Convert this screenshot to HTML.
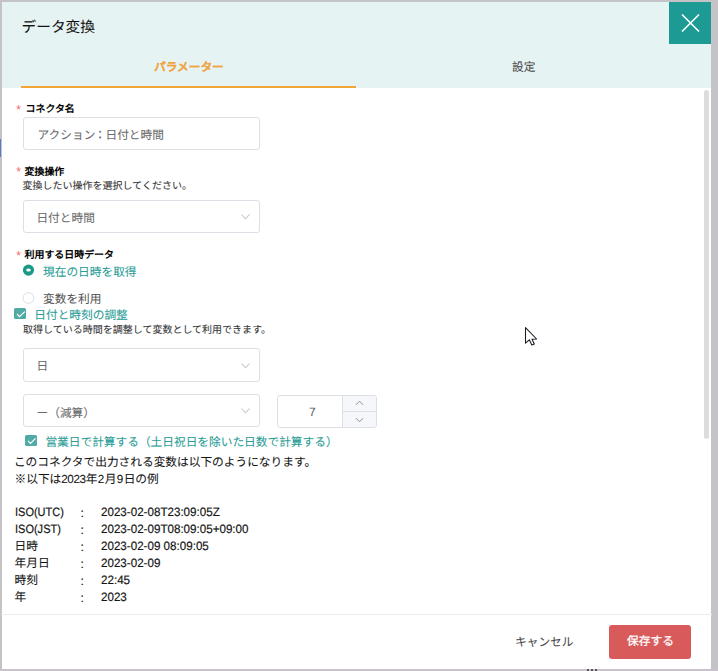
<!DOCTYPE html>
<html lang="zh-CN">
<head>
<meta charset="utf-8">
<style>
html,body{margin:0;padding:0;}
body{width:718px;height:671px;position:relative;overflow:hidden;background:#c4c3c8;font-family:"Liberation Sans",sans-serif;color:#303133;}
.a{position:absolute;white-space:nowrap;line-height:1;text-rendering:geometricPrecision;-webkit-text-stroke:0.08px currentColor;}
.lat{-webkit-text-stroke:0.18px currentColor;}
.box{position:absolute;box-sizing:border-box;border:1px solid #dcdfe6;border-radius:3px;background:#fff;}
.req{position:absolute;font-size:12px;line-height:1;color:#f56c6c;}
.dg{letter-spacing:-0.5px;}
svg{position:absolute;overflow:visible;}
</style>
</head>
<body>
<div style="position:absolute;left:1.7px;top:2px;width:709.7px;height:666.6px;background:#fff;"></div>
<div style="position:absolute;left:1.7px;top:2px;width:709.7px;height:86px;background:#e6f3f3;"></div>
<div style="position:absolute;left:0;top:139px;width:1.3px;height:18px;background:#5b79c6"></div>
<div style="position:absolute;left:669px;top:2px;width:42px;height:42px;background:#1e9a94;"></div>
<svg style="left:669px;top:2px" width="42" height="42" viewBox="0 0 42 42"><path d="M13 12.5 L30 29.5 M30 12.5 L13 29.5" stroke="#fff" stroke-width="1.6" fill="none"/></svg>
<div class="a" style="left:21.5px;top:20.5px;font-size:14.7px;color:#141414">データ変換</div>
<div class="a" style="left:154px;top:62px;font-size:11.7px;color:#f0a543;font-weight:bold">パラメーター</div>
<div class="a" style="left:512px;top:62px;font-size:11.7px;color:#4a4a4a">設定</div>
<div style="position:absolute;left:21.2px;top:86px;width:335px;height:2px;background:#f2a637"></div>
<div style="position:absolute;left:704px;top:90px;width:5px;height:349px;border-radius:3px;background:#dcdcdf"></div>
<div class="req" style="left:16.3px;top:103.5px">*</div>
<div class="a" style="left:25.5px;top:104.5px;font-size:9.95px;font-weight:bold;color:#000;-webkit-text-stroke:0">コネクタ名</div>
<div class="box" style="left:23px;top:117px;width:237px;height:33px"></div>
<div class="a" style="left:37.5px;top:130px;font-size:11.7px;color:#6b6b6b">アクショ<span style="letter-spacing:-1.2px">ン</span><span lang="zh-TW" style="letter-spacing:-0.4px">：</span>日付と時間</div>
<div class="req" style="left:16.3px;top:166px">*</div>
<div class="a" style="left:24.5px;top:167.5px;font-size:9.95px;font-weight:bold;color:#000;-webkit-text-stroke:0">変換操作</div>
<div class="a" style="left:22.5px;top:181.5px;font-size:10.0px;color:#333">変換したい操作を選択してください。</div>
<div class="box" style="left:23px;top:200px;width:237px;height:33px"></div>
<div class="a" style="left:36.4px;top:213px;font-size:11.7px;color:#6b6b6b">日付と時間</div>
<svg style="left:241px;top:214px" width="9" height="6" viewBox="0 0 9 6"><path d="M0.5 0.5 L4.5 4.8 L8.5 0.5" stroke="#c0c4cc" stroke-width="1.1" fill="none"/></svg>
<div class="req" style="left:16.3px;top:249.5px">*</div>
<div class="a" style="left:24.5px;top:250.5px;font-size:9.95px;font-weight:bold;color:#000;-webkit-text-stroke:0">利用する日時データ</div>
<svg style="left:22px;top:264px" width="13" height="13" viewBox="0 0 13 13"><circle cx="6.5" cy="6.1" r="5.6" fill="#1a9986"/><ellipse cx="6.5" cy="6.1" rx="2.3" ry="1.5" fill="#fff"/></svg>
<div class="a" style="left:43px;top:267px;font-size:11.7px;color:#2a9d96">現在の日時を取得</div>
<svg style="left:22px;top:292px" width="13" height="13" viewBox="0 0 13 13"><circle cx="6.5" cy="6" r="5.4" fill="#fff" stroke="#dcdfe6" stroke-width="1"/></svg>
<div class="a" style="left:43px;top:294px;font-size:11.7px;color:#555">変数を利用</div>
<svg style="left:14px;top:308px" width="12" height="11" viewBox="0 0 12 11"><rect x="0" y="0" width="12" height="11" rx="1.5" fill="#50aaa5"/><path d="M3 6 L5.5 8.6 L10.8 3.6" stroke="#fff" stroke-width="1.2" fill="none"/></svg>
<div class="a" style="left:34.3px;top:310px;font-size:11.7px;color:#2a9d96">日付と時刻の調整</div>
<div class="a" style="left:23px;top:326px;font-size:10.0px;color:#333">取得している時間を調整して変数として利用できます。</div>
<div class="box" style="left:23px;top:348.2px;width:237px;height:33.4px"></div>
<div class="a" style="left:36.5px;top:361.2px;font-size:11.7px;color:#6b6b6b">日</div>
<svg style="left:241px;top:362.6px" width="9" height="6" viewBox="0 0 9 6"><path d="M0.5 0.5 L4.5 4.8 L8.5 0.5" stroke="#c0c4cc" stroke-width="1.1" fill="none"/></svg>
<div class="box" style="left:23px;top:394px;width:237px;height:33px"></div>
<div class="a" style="left:36.5px;top:408px;font-size:11.7px;color:#6b6b6b">ー（減算）</div>
<svg style="left:241px;top:408px" width="9" height="6" viewBox="0 0 9 6"><path d="M0.5 0.5 L4.5 4.8 L8.5 0.5" stroke="#c0c4cc" stroke-width="1.1" fill="none"/></svg>
<div class="box" style="left:277px;top:395px;width:100px;height:33px;overflow:hidden">
  <div style="position:absolute;left:64px;top:0;width:34px;height:31px;background:#f5f7fa;border-left:1px solid #dcdfe6"></div>
  <div style="position:absolute;left:64px;top:14.6px;width:35px;height:1px;background:#dcdfe6"></div>
</div>
<svg style="left:355px;top:400px" width="9" height="6" viewBox="0 0 9 6"><path d="M1 4.8 L4.5 1.2 L8 4.8" stroke="#8c8f96" stroke-width="1" fill="none"/></svg>
<svg style="left:355px;top:417px" width="9" height="6" viewBox="0 0 9 6"><path d="M1 1.2 L4.5 4.8 L8 1.2" stroke="#8c8f96" stroke-width="1" fill="none"/></svg>
<div class="a" style="left:309px;top:405.5px;font-size:12.1px;color:#555;-webkit-text-stroke:0">7</div>
<svg style="left:25px;top:435px" width="12" height="11" viewBox="0 0 12 11"><rect x="0" y="0" width="12" height="11" rx="1.5" fill="#50aaa5"/><path d="M3 5.8 L5.5 8.4 L10.5 3.4" stroke="#fff" stroke-width="1.2" fill="none"/></svg>
<div class="a" style="left:45.4px;top:437px;font-size:11.7px;color:#2a9d96">営業日で計算する（土日祝日を除いた日数で計算する）</div>
<div class="a" style="left:13.9px;top:457px;font-size:11.7px;color:#141414">このコネクタで出力される変数は以下のようになります。</div>
<div class="a" style="left:14.5px;top:473.7px;font-size:11.7px;color:#141414">※以下は<span style="letter-spacing:-0.4px">2023</span><span style="letter-spacing:0.4px">年2月9</span>日の例</div>
<div class="a lat" style="left:15.3px;top:506px;font-size:12.1px;color:#141414;transform:scaleX(0.91);transform-origin:0 0">ISO(UTC)</div>
<div class="a lat" style="left:80.5px;top:506.5px;font-size:12.1px;color:#141414">:</div>
<div class="a lat" style="left:101px;top:506px;font-size:12.1px;color:#141414;transform:scaleX(0.96);transform-origin:0 0">2023-02-08T23:09:05Z</div>
<div class="a lat" style="left:15.3px;top:523px;font-size:12.1px;color:#141414;transform:scaleX(0.91);transform-origin:0 0">ISO(JST)</div>
<div class="a lat" style="left:80.5px;top:523.5px;font-size:12.1px;color:#141414">:</div>
<div class="a lat" style="left:101px;top:523px;font-size:12.1px;color:#141414;transform:scaleX(0.96);transform-origin:0 0">2023-02-09T08:09:05+09:00</div>
<div class="a" style="left:14.6px;top:541px;font-size:11.7px;color:#141414">日時</div>
<div class="a lat" style="left:80.5px;top:540.5px;font-size:12.1px;color:#141414">:</div>
<div class="a lat" style="left:101px;top:540px;font-size:12.1px;color:#141414;transform:scaleX(0.96);transform-origin:0 0">2023-02-09 08:09:05</div>
<div class="a" style="left:14.6px;top:558px;font-size:11.7px;color:#141414">年月日</div>
<div class="a lat" style="left:80.5px;top:557.5px;font-size:12.1px;color:#141414">:</div>
<div class="a lat" style="left:101px;top:557px;font-size:12.1px;color:#141414;transform:scaleX(0.96);transform-origin:0 0">2023-02-09</div>
<div class="a" style="left:14.6px;top:575px;font-size:11.7px;color:#141414">時刻</div>
<div class="a lat" style="left:80.5px;top:574.5px;font-size:12.1px;color:#141414">:</div>
<div class="a lat" style="left:101px;top:574px;font-size:12.1px;color:#141414;transform:scaleX(0.96);transform-origin:0 0">22:45</div>
<div class="a" style="left:14.6px;top:592px;font-size:11.7px;color:#141414">年</div>
<div class="a lat" style="left:80.5px;top:591.5px;font-size:12.1px;color:#141414">:</div>
<div class="a lat" style="left:101px;top:591px;font-size:12.1px;color:#141414;transform:scaleX(0.96);transform-origin:0 0">2023</div>
<div style="position:absolute;left:0;top:668.6px;width:718px;height:3px;background:#c8c3ca"></div>
<div style="position:absolute;left:587px;top:669px;width:2px;height:2px;background:#555"></div><div style="position:absolute;left:591px;top:669px;width:2px;height:2px;background:#555"></div><div style="position:absolute;left:595px;top:669px;width:2px;height:2px;background:#555"></div>
<div style="position:absolute;left:1px;top:614px;width:711px;height:1px;background:#ebebeb"></div>
<div class="a" style="left:515px;top:636.5px;font-size:11.7px;color:#4a4a4a">キャンセル</div>
<div style="position:absolute;left:609px;top:625px;width:82px;height:34px;border-radius:3px;background:#d95a5a"></div>
<div class="a" style="left:627px;top:636.2px;font-size:11.75px;color:#fff;-webkit-text-stroke:0.3px #fff">保存する</div>
<svg style="left:520px;top:322px" width="25" height="30" viewBox="0 0 25 30">
  <path d="M5.5 5.6 L5.5 21.2 L9.3 17.8 L11.8 23.0 L14.3 22.0 L12.0 17.2 L16.6 17.0 Z" fill="#fff" stroke="#1a1a24" stroke-width="1.05" stroke-linejoin="round"/>
</svg>
</body>
</html>
